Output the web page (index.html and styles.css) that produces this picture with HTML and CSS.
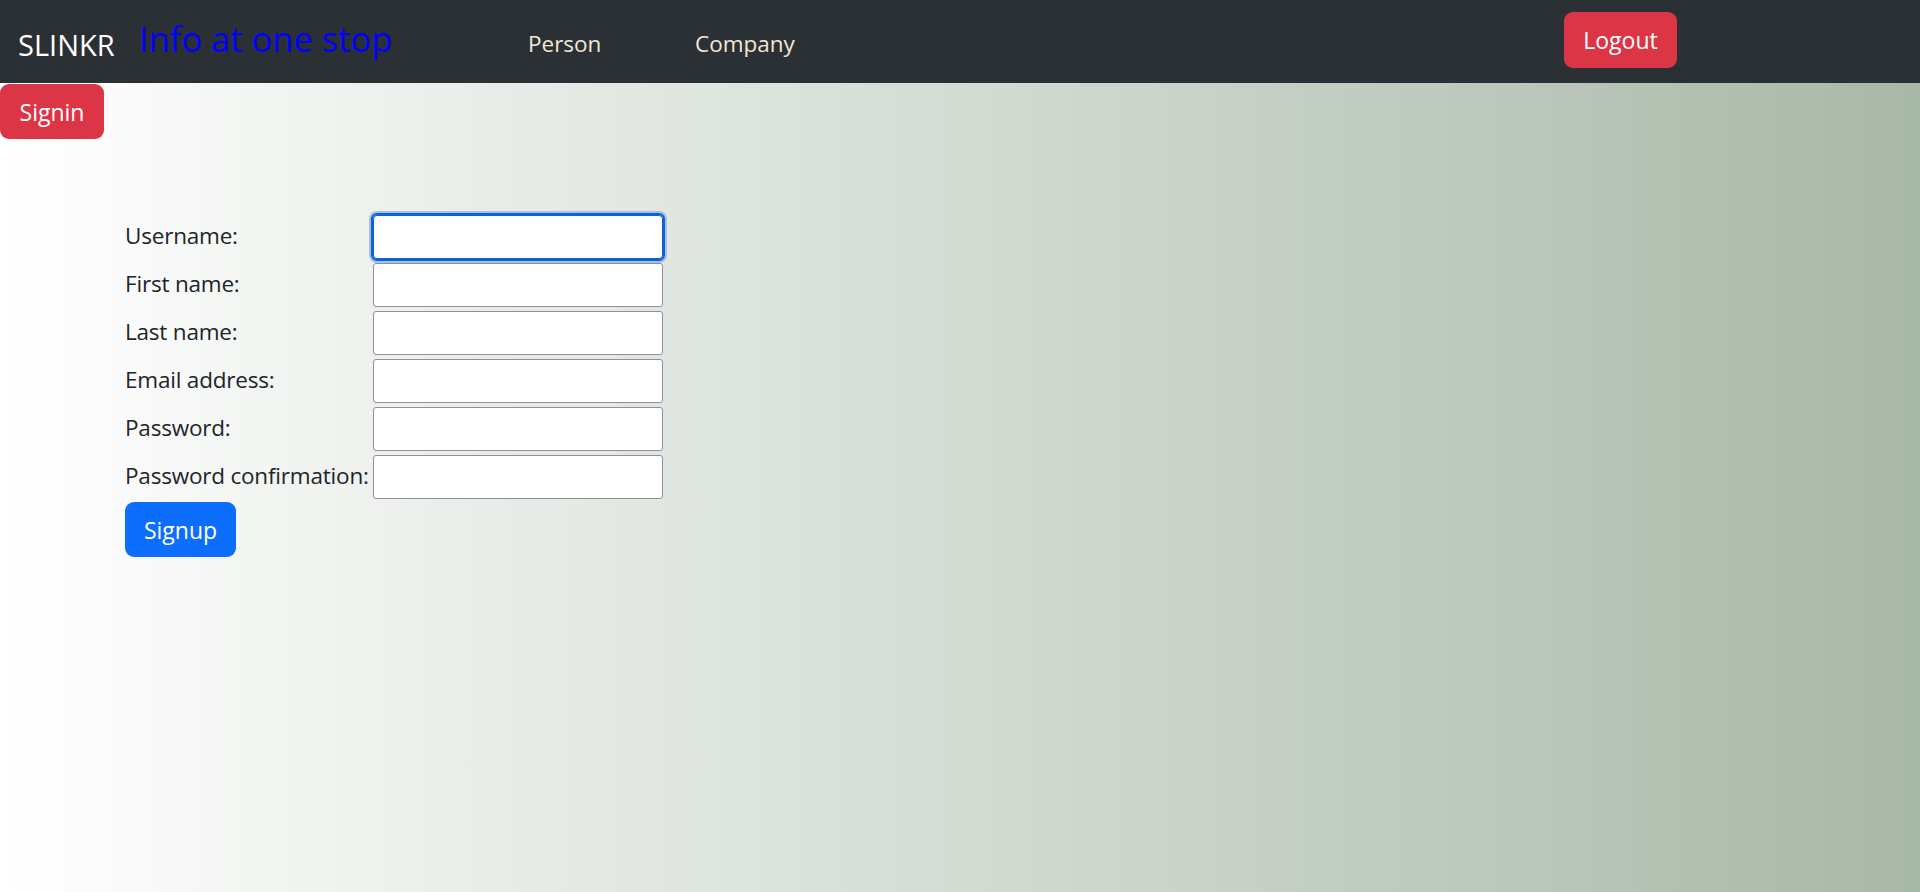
FILE: index.html
```html
<!DOCTYPE html>
<html lang="en">
<head>
<meta charset="utf-8">
<title>SLINKR - Signup</title>
<link rel="stylesheet" href="styles.css">
</head>
<body>
<nav class="navbar">
  <a class="brand" href="#">SLINKR</a>
  <span class="tagline">Info at one stop</span>
  <ul class="nav-links">
    <li><a class="nav-link" href="#">Person</a></li>
    <li><a class="nav-link" href="#">Company</a></li>
  </ul>
  <button class="btn btn-danger btn-logout" type="button">Logout</button>
</nav>
<button class="btn btn-danger btn-signin" type="button">Signin</button>
<form class="signup-form">
  <div class="form-grid">
    <label class="form-label" for="username">Username:</label>
    <input class="form-input is-focused" id="username" type="text">
    <label class="form-label" for="first">First name:</label>
    <input class="form-input" id="first" type="text">
    <label class="form-label" for="last">Last name:</label>
    <input class="form-input" id="last" type="text">
    <label class="form-label" for="email">Email address:</label>
    <input class="form-input" id="email" type="email">
    <label class="form-label" for="pw">Password:</label>
    <input class="form-input" id="pw" type="password">
    <label class="form-label" for="pw2">Password confirmation:</label>
    <input class="form-input" id="pw2" type="password">
  </div>
  <button class="btn btn-primary btn-signup" type="submit">Signup</button>
</form>
</body>
</html>
```
FILE: styles.css
```css
* {
  box-sizing: border-box;
}

html, body {
  margin: 0;
  padding: 0;
}

html {
  background: linear-gradient(to right, #ffffff, #a8b8a8);
  min-height: 100%;
}

body {
  min-height: 100vh;
  font-family: "Open Sans", "Noto Sans", sans-serif;
  font-size: 22.5px;
  color: #212529;
  background: linear-gradient(to right, #ffffff, #a8b8a8);
}

.navbar {
  height: 83px;
  background: #2b3035;
  display: flex;
  align-items: center;
  padding-left: 18px;
}

.brand {
  width: 121px;
  color: #ffffff;
  text-decoration: none;
  font-size: 29px;
  margin-top: 6px;
}

.tagline {
  width: 389px;
  color: #0000ff;
  font-size: 34.5px;
  margin-top: -6px;
}

.nav-links {
  list-style: none;
  margin: 0;
  padding: 0;
  display: flex;
  margin-top: 4px;
}

.nav-links li:first-child {
  width: 167px;
}

.nav-links li:last-child {
  width: 869px;
}

.nav-link {
  color: #f3e6d4;
  text-decoration: none;
  font-size: 22.5px;
}

.btn {
  border: 0;
  border-radius: 9px;
  color: #ffffff;
  font-family: "Open Sans", "Noto Sans", sans-serif;
  font-size: 23px;
  height: 55px;
  padding: 0;
  display: flex;
  align-items: center;
  justify-content: center;
  cursor: pointer;
}

.btn-danger {
  background: #dc3545;
}

.btn-primary {
  background: #0d6efd;
}

.btn-logout {
  width: 113px;
  height: 56px;
  margin-top: -4px;
}

.btn-signin {
  width: 104px;
  margin-top: 1px;
}

.signup-form {
  padding-left: 125px;
  padding-top: 76px;
}

.form-grid {
  display: grid;
  grid-template-columns: 248px 290px;
  row-gap: 4px;
  align-items: center;
}

.form-label {
  white-space: nowrap;
  line-height: 1;
  padding-bottom: 2px;
  letter-spacing: -0.2px;
}

.form-input {
  height: 44px;
  width: 290px;
  background: #ffffff;
  border: 1px solid #8f8f9d;
  border-radius: 3px;
  font-size: 20px;
  padding: 2px 4px;
  outline: none;
}

.form-input.is-focused {
  border-color: #0b62d9;
  outline: 2px solid #0b62d9;
  outline-offset: 0;
  box-shadow: 0 0 0 4px #a9c1e0;
  border-radius: 4px;
}

.btn-signup {
  width: 111px;
  margin-top: 3px;
}
```
